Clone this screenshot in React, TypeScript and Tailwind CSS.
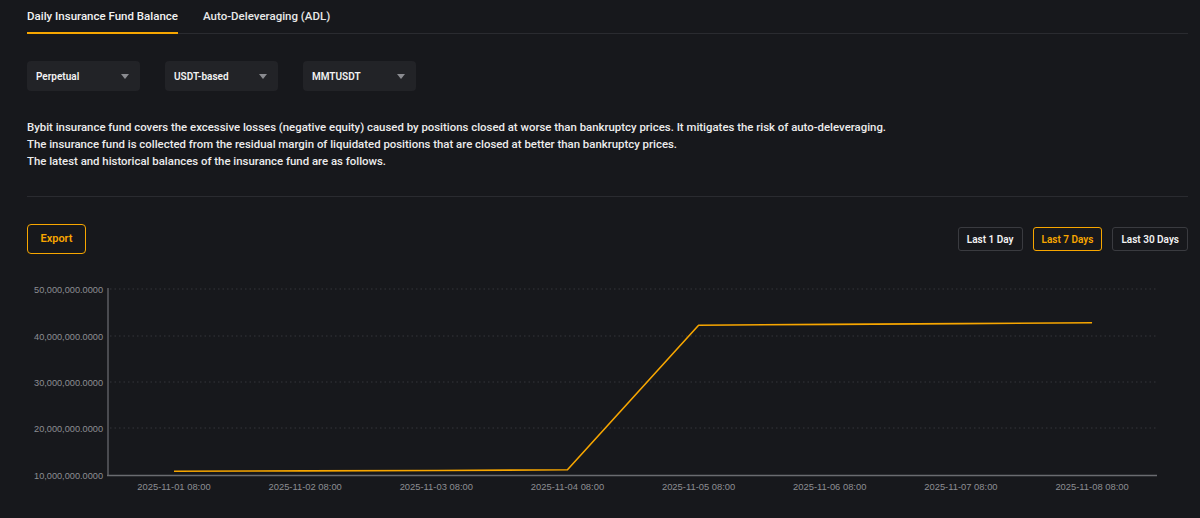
import { useState } from "react";

const yTicks = [
  { label: "50,000,000.0000", y: 290 },
  { label: "40,000,000.0000", y: 337 },
  { label: "30,000,000.0000", y: 383 },
  { label: "20,000,000.0000", y: 429 },
  { label: "10,000,000.0000", y: 476 },
];

const days = [
  "2025-11-01 08:00",
  "2025-11-02 08:00",
  "2025-11-03 08:00",
  "2025-11-04 08:00",
  "2025-11-05 08:00",
  "2025-11-06 08:00",
  "2025-11-07 08:00",
  "2025-11-08 08:00",
];

const values = [472.2, 471.9, 471.5, 470.8, 326.2, 325.4, 324.6, 323.8];

function Select({ label }: { label: string }) {
  return (
    <div className="w-[113px] h-[30px] rounded-[4px] bg-[#222327] pl-[9px] pr-[11px] flex items-center justify-between">
      <span className="text-[10px] font-semibold text-[#f2f2f2]">{label}</span>
      <span className="w-0 h-0 border-l-[4px] border-r-[4px] border-t-[5px] border-l-transparent border-r-transparent border-t-[#8a8b90]" />
    </div>
  );
}

function Chart() {
  const xs = days.map((_, i) => 174 + i * 131.15);
  const pts = xs.map((x, i) => `${x},${values[i]}`).join(" ");
  return (
    <svg className="block" width={1200} height={263} viewBox="0 255 1200 263">
      {yTicks.slice(0, 4).map((t) => (
        <line key={t.y} x1={110} x2={1157} y1={t.y} y2={t.y} stroke="#34353a" strokeWidth={1} strokeDasharray="1.5 3" />
      ))}
      <line x1={108} x2={108} y1={289} y2={477} stroke="#5c5d62" strokeWidth={1.5} />
      <line x1={107} x2={1157} y1={476.5} y2={476.5} stroke="#6a6b70" strokeWidth={1.5} />
      {yTicks.map((t) => (
        <text key={t.label} x={103} y={t.y + 3.5} textAnchor="end" fontSize={9.2} fill="#8d8e93" fontFamily="'Liberation Sans', Arial, sans-serif">
          {t.label}
        </text>
      ))}
      {days.map((d, i) => (
        <text key={d} x={xs[i]} y={491} textAnchor="middle" fontSize={9.4} fill="#8d8e93" fontFamily="'Liberation Sans', Arial, sans-serif">
          {d}
        </text>
      ))}
      <polyline points={pts} fill="none" stroke="#f7a600" strokeWidth={1.6} strokeLinejoin="round" />
    </svg>
  );
}

export default function App() {
  const [tab, setTab] = useState(0);
  const [period, setPeriod] = useState(1);

  return (
    <div className="w-full h-[518px] overflow-hidden bg-[#17181c] text-white font-['Roboto','Noto_Sans',sans-serif]">
      <div className="pl-[27px] pr-[12px]">
        <div className="flex gap-[25px] border-b border-[#2a2b30] h-[34px]">
          {["Daily Insurance Fund Balance", "Auto-Deleveraging (ADL)"].map((t, i) => (
            <button
              key={t}
              onClick={() => setTab(i)}
              className={
                tab === i
                  ? "pt-[7px] pb-[8px] text-[11.5px] leading-[16px] font-medium text-[#f2f2f2] border-b-2 border-[#f7a600] -mb-px"
                  : "pt-[7px] pb-[8px] text-[11.5px] leading-[16px] font-medium text-[#e8e8e8]"
              }
            >
              {t}
            </button>
          ))}
        </div>

        <div className="mt-[27px] flex gap-[25px]">
          <Select label="Perpetual" />
          <Select label="USDT-based" />
          <Select label="MMTUSDT" />
        </div>

        <div className="mt-[28px] text-[11.4px] leading-[17px] font-medium text-[#ececec]">
          <p>Bybit insurance fund covers the excessive losses (negative equity) caused by positions closed at worse than bankruptcy prices. It mitigates the risk of auto-deleveraging.</p>
          <p>The insurance fund is collected from the residual margin of liquidated positions that are closed at better than bankruptcy prices.</p>
          <p>The latest and historical balances of the insurance fund are as follows.</p>
        </div>

        <div className="mt-[26px] border-t border-[#2a2b30]" />

        <div className="mt-[27px] flex items-center justify-between h-[30px]">
          <button className="h-[30px] w-[59px] rounded-[4px] border border-[#f7a600] text-[11px] font-semibold text-[#f7a600]">
            Export
          </button>
          <div className="flex gap-[10px]">
            {["Last 1 Day", "Last 7 Days", "Last 30 Days"].map((p, i) => (
              <button
                key={p}
                onClick={() => setPeriod(i)}
                className={
                  period === i
                    ? "h-[24px] px-[8px] rounded-[3px] border border-[#f7a600] text-[10px] font-semibold text-[#f7a600]"
                    : "h-[24px] px-[8px] rounded-[3px] border border-[#3a3b40] text-[10px] font-semibold text-[#f2f2f2]"
                }
              >
                {p}
              </button>
            ))}
          </div>
        </div>
      </div>
      <Chart />
    </div>
  );
}
